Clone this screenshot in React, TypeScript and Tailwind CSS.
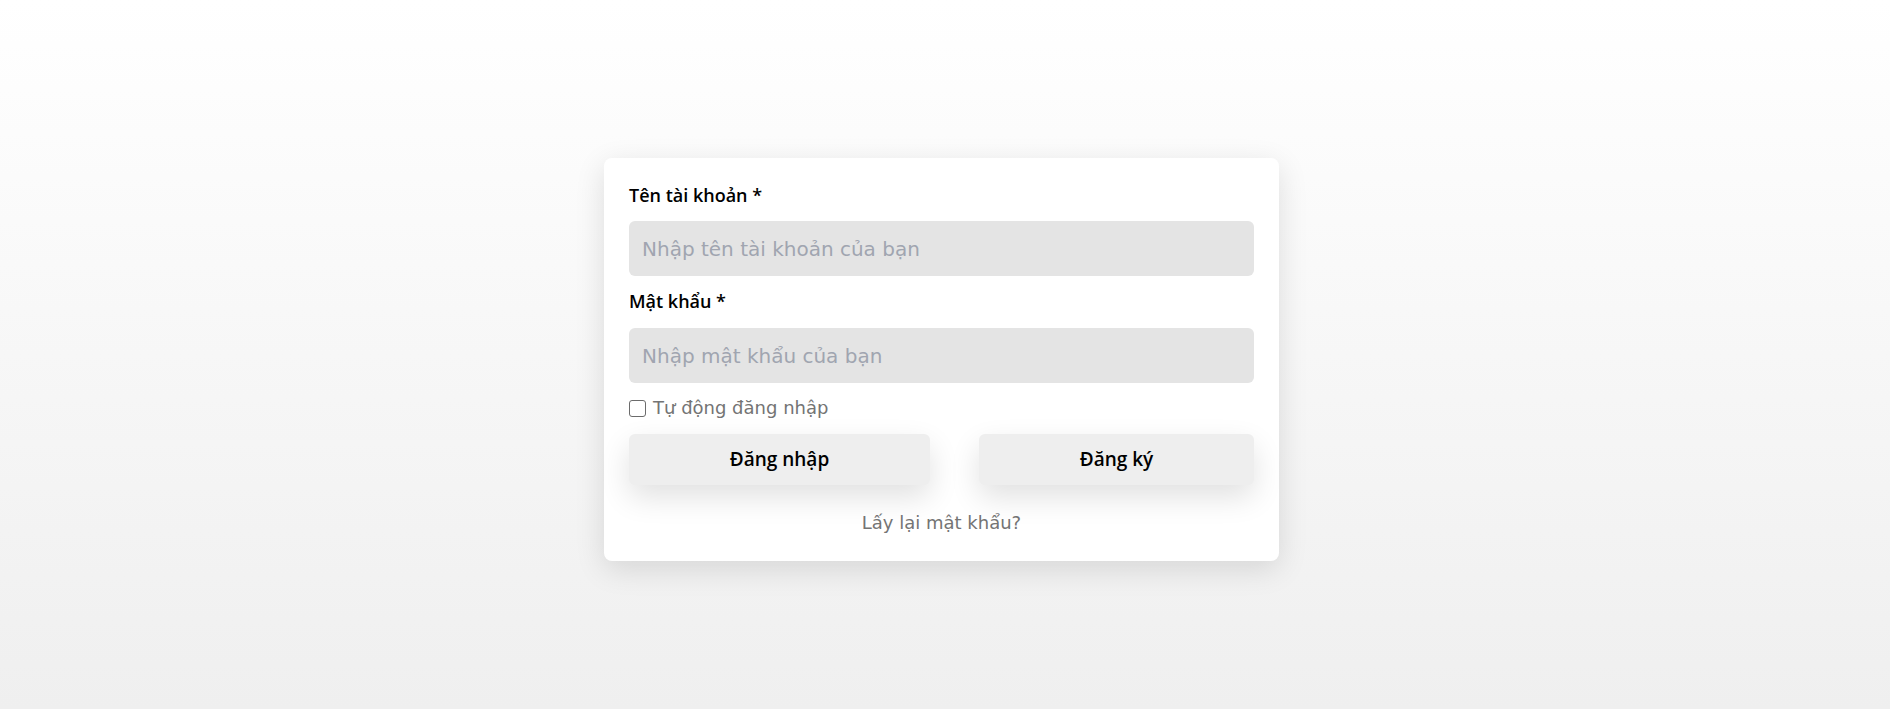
const font = { fontFamily: '"DejaVu Sans", "Noto Sans", sans-serif' };
const heading = { fontFamily: '"Open Sans", "DejaVu Sans", sans-serif' };

const App = () => {
  return (
    <div
      className="flex h-[709px] w-full items-center justify-center bg-gradient-to-b from-white to-[#efefef] pt-[10px] pr-[7px]"
      style={font}
    >
      <div className="w-[675px] rounded-lg bg-white px-[25px] pt-[25px] pb-[26px] shadow-[0_8px_30px_rgba(0,0,0,0.12)]">
        <label className="block text-[18px] font-semibold leading-[24px] text-black" style={heading}>
          Tên tài khoản *
        </label>
        <input
          className="mt-[14px] h-[55px] w-full rounded-md bg-[#e4e4e4] px-[13px] text-[20px] outline-none placeholder:text-[#a0a5b0]"
          placeholder="Nhập tên tài khoản của bạn"
        />
        <label className="mt-[13px] block text-[18px] font-semibold leading-[24px] text-black" style={heading}>
          Mật khẩu *
        </label>
        <input
          type="password"
          className="mt-[15px] h-[55px] w-full rounded-md bg-[#e4e4e4] px-[13px] text-[20px] outline-none placeholder:text-[#a0a5b0]"
          placeholder="Nhập mật khẩu của bạn"
        />
        <div className="mt-[13px] flex h-[24px] items-center gap-[7px]">
          <span className="h-[17px] w-[17px] rounded-[3px] border-[1.5px] border-[#6b6b6b] bg-white" />
          <span className="text-[18px] leading-[24px] text-[#747474]">Tự động đăng nhập</span>
        </div>
        <div className="mt-[14px] flex gap-[49px]" style={heading}>
          <button className="h-[51px] w-[301px] rounded-md bg-[#eeeeee] text-[19px] font-semibold text-black shadow-[0_12px_30px_rgba(0,0,0,0.12)]">
            Đăng nhập
          </button>
          <button className="h-[51px] flex-1 rounded-md bg-[#eeeeee] text-[19px] font-semibold text-black shadow-[0_12px_30px_rgba(0,0,0,0.12)]">
            Đăng ký
          </button>
        </div>
        <p className="mt-[26px] text-center text-[18px] leading-[24px] text-[#747474]">
          Lấy lại mật khẩu?
        </p>
      </div>
    </div>
  );
};

export default App;
